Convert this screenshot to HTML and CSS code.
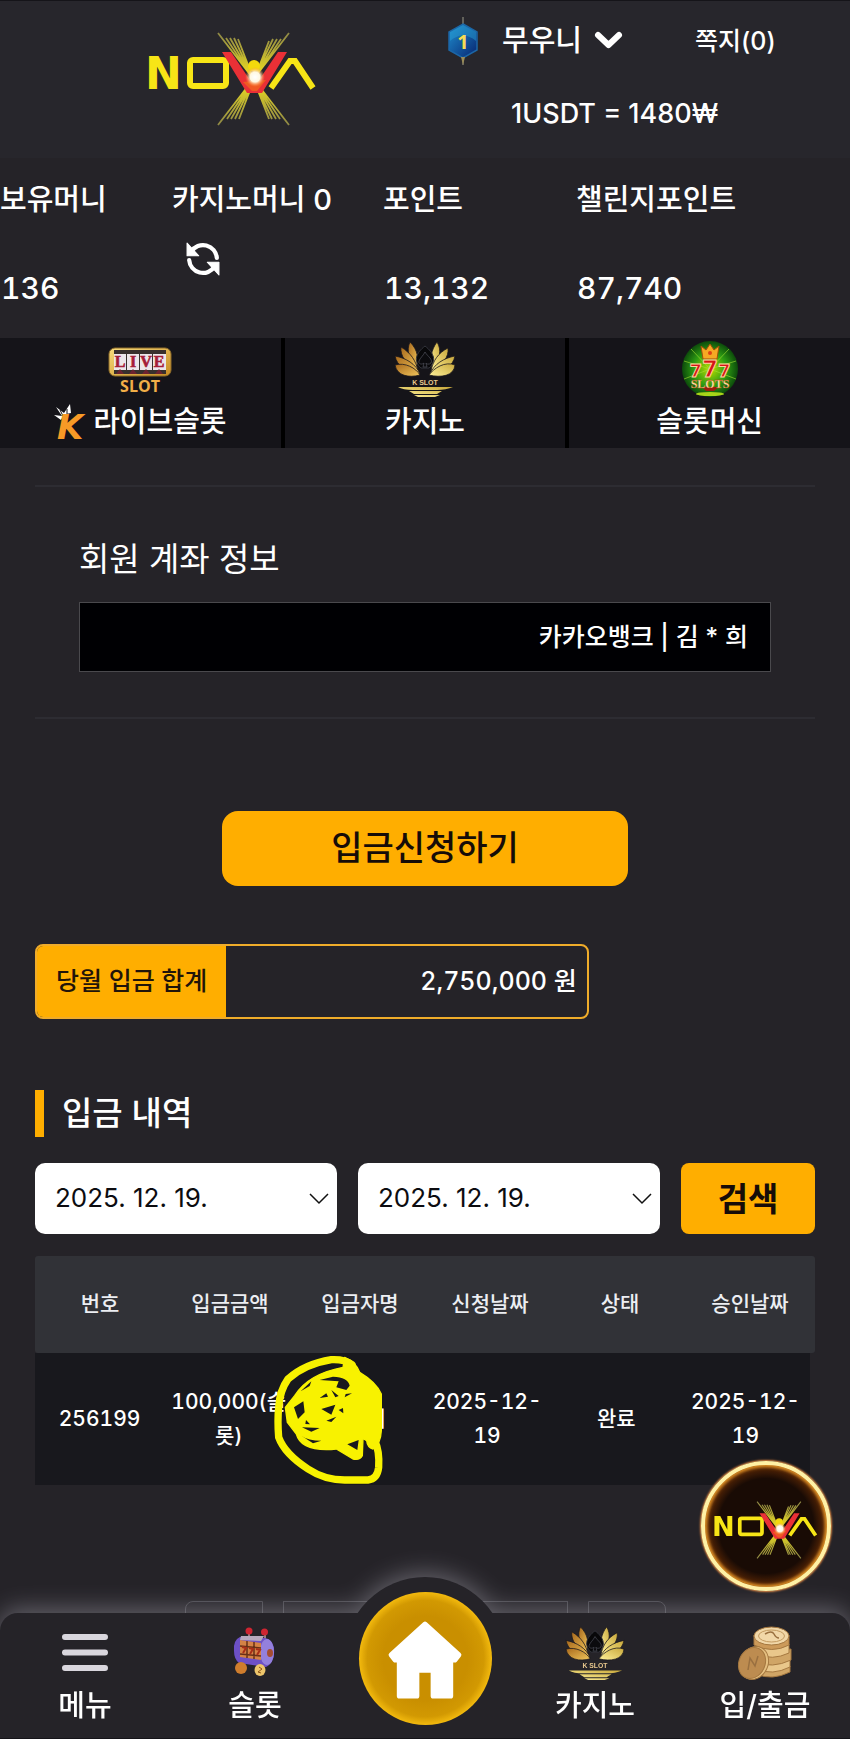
FILE: index.html
```html
<!DOCTYPE html>
<html lang="ko">
<head>
<meta charset="utf-8">
<meta name="viewport" content="width=device-width, initial-scale=1">
<title>NOVA 입금</title>
<link rel="stylesheet" href="styles.css">
</head>
<body>
<svg class="defs" aria-hidden="true">
  <defs>
    <linearGradient id="gold" x1="0" y1="0" x2="1" y2="1"><stop offset="0" stop-color="#f7dd7c"/><stop offset="1" stop-color="#c78a22"/></linearGradient>
    <linearGradient id="petalL" x1="0" y1="0" x2="1" y2="1"><stop offset="0" stop-color="#a8691c"/><stop offset="1" stop-color="#f2c75c"/></linearGradient>
    <linearGradient id="petalR" x1="1" y1="0" x2="0" y2="1"><stop offset="0" stop-color="#c9a83b"/><stop offset="1" stop-color="#fff29a"/></linearGradient>
    <linearGradient id="ray" x1="0" y1="0" x2="0" y2="1"><stop offset="0" stop-color="#8d8746"/><stop offset=".5" stop-color="#f5e51c"/><stop offset="1" stop-color="#8d8746"/></linearGradient>
    <radialGradient id="spark"><stop offset="0" stop-color="#fff"/><stop offset=".5" stop-color="#fff8e0"/><stop offset="1" stop-color="#ff8a2a" stop-opacity="0"/></radialGradient>
    <radialGradient id="green"><stop offset="0" stop-color="#b8e000"/><stop offset=".6" stop-color="#2c9a12"/><stop offset="1" stop-color="#0c4a0b"/></radialGradient>
    <linearGradient id="blue" x1="0" y1="0" x2="1" y2="1"><stop offset="0" stop-color="#1f8fd0"/><stop offset="1" stop-color="#07236f"/></linearGradient>
    <symbol id="logo" viewBox="147 32 171 94">
      <g stroke="url(#ray)" stroke-width="1.8" fill="none">
        <path d="M218 33 289 125M226 38 280 119M230 38 276 119M234 38 272 119M238 39 269 119"/>
        <path d="M289 33 218 125M281 39 227 119M277 39 231 119M273 39 235 119M269 41 239 119"/>
      </g>
      <text x="145" y="89" font-family="DejaVu Sans, sans-serif" font-weight="700" font-size="44" fill="#f7e516">N</text>
      <rect x="190" y="60" width="36" height="26" rx="3" fill="none" stroke="#f7e516" stroke-width="6"/>
      <path d="M271 88 290 61H295L313 88" fill="none" stroke="#f7e516" stroke-width="6"/>
      <path d="M222 52H231L252 83H257L278 52H287L262 93H247Z" fill="#ea3036"/>
      <path d="M243 82 252 91H257L266 80Z" fill="#f05a22"/>
      <circle cx="254" cy="66" r="6" fill="#f3d90c"/>
      <circle cx="255" cy="77" r="10" fill="url(#spark)"/>
    </symbol>
    <symbol id="lotus" viewBox="0 0 62 56">
      <g fill="url(#petalL)" stroke="#1a171c" stroke-width=".8">
        <path d="M16 1C24 9 25 18 22 27 15 18 12 9 16 1Z"/><path d="M7 6C17 12 22 20 24 30 12 23 6 15 7 6Z"/><path d="M1 15C12 17 22 23 26 33 12 31 3 25 1 15Z"/><path d="M1 24C11 21 22 27 26 34 15 37 3 35 1 24Z"/>
      </g>
      <g fill="url(#petalR)" stroke="#1a171c" stroke-width=".8">
        <path d="M43 1C37 9 36 18 38 27 46 18 48 9 43 1Z"/><path d="M54 7C44 12 39 20 37 30 49 24 55 16 54 7Z"/><path d="M61 15C50 17 40 23 36 33 50 31 59 25 61 15Z"/><path d="M61 24C51 20 40 27 35 34 47 37 60 35 61 24Z"/>
      </g>
      <path d="M31 5C40 12 43 20 35 27H27C19 20 22 12 31 5Z" fill="#08080a" stroke="#33343c"/>
      <path d="M31 11C34 16 39 18 37 22 35 24 32 23 32 22L33 26H29L30 22C28 24 24 23 25 20 26 17 29 15 31 11Z" fill="#0b0b0e" stroke="#50525c" stroke-width=".7"/>
      <text x="31" y="44" text-anchor="middle" font-family="Liberation Sans, sans-serif" font-weight="700" font-size="7" fill="#e9c98e">K SLOT</text>
      <path d="M4 46H59Q52 49 43 49H19Q9 49 4 46ZM15 50H48L43 53H20ZM20 54H46L41 56H24Z" fill="url(#petalR)"/>
    </symbol>
  </defs>
</svg>

<header class="top">
  <a class="brand" href="#" aria-label="NOVA"><svg class="brand-logo"><use href="#logo"/></svg></a>
  <div class="top-info">
    <div class="user-row">
      <button class="user" type="button">
        <svg class="level" viewBox="0 0 30 50" aria-hidden="true"><path d="M15 1V49" stroke="#77766b" stroke-width="1.5"/><path d="M15 8 29 16V34L15 42 1 34V16Z" fill="url(#blue)" stroke="#1c66a6" stroke-width="1.5"/><path d="M15 9 28 16V25Q15 14 2 25V16Z" fill="#2aa5d8" opacity=".45"/><path d="M13 41H17L15 49Z" fill="#9a8b57"/><text x="15" y="33" text-anchor="middle" font-family="Open Sans, sans-serif" font-weight="700" font-size="20" fill="#f6dc55">1</text></svg>
        <span>무우니</span>
        <svg class="caret" viewBox="0 0 29 20" aria-hidden="true"><path d="M4 4 14.500 14 25 4" fill="none" stroke="#fff" stroke-width="6" stroke-linecap="round" stroke-linejoin="round"/></svg>
      </button>
      <a class="messages" href="#">쪽지(0)</a>
    </div>
    <p class="rate">1USDT = 1480₩</p>
  </div>
</header>

<section class="balances">
  <div class="balance"><p class="balance-label">보유머니</p><p class="balance-value">136</p></div>
  <div class="balance"><p class="balance-label">카지노머니 0</p>
    <button class="refresh" type="button" aria-label="새로고침"><svg viewBox="0 0 32 32"><path d="M5 9A13 13 0 0 1 29 15M27 23A13 13 0 0 1 3 17" fill="none" stroke="#fff" stroke-width="4" stroke-linecap="round"/><path d="M1 1V13H12ZM31 31V19H20Z" fill="#fff" stroke="#fff" stroke-linejoin="round"/></svg></button>
  </div>
  <div class="balance"><p class="balance-label">포인트</p><p class="balance-value">13,132</p></div>
  <div class="balance"><p class="balance-label">챌린지포인트</p><p class="balance-value">87,740</p></div>
</section>

<nav class="tabs" aria-label="게임">
  <a class="tab" href="#">
    <svg class="tab-icon" viewBox="0 0 64 56" aria-hidden="true"><rect x="1" y="7" width="62" height="28" rx="6" fill="url(#gold)" stroke="#8d6b2a"/><rect x="6" y="9" width="52" height="24" fill="#38302d"/><g fill="#ece6ea"><rect x="6" y="13" width="12" height="16"/><rect x="19" y="13" width="12" height="16"/><rect x="32" y="13" width="12" height="16"/><rect x="45" y="13" width="13" height="16"/></g><g font-family="Liberation Serif, serif" font-weight="700" font-size="16" fill="#a51d38" stroke="#a51d38" stroke-width=".6" text-anchor="middle"><text x="12" y="26">L</text><text x="25" y="26">I</text><text x="38" y="26">V</text><text x="51" y="26">E</text></g><path d="M12 28 16 33H8ZM25 28 29 33H21ZM38 28 42 33H34ZM51 28 55 33H47Z" fill="#6d2230"/><text x="32" y="51" text-anchor="middle" font-family="Open Sans, sans-serif" font-weight="700" font-size="16" fill="#f1ae48">SLOT</text></svg>
    <span class="tab-label"><svg class="k-icon" viewBox="0 0 34 36" aria-hidden="true"><path d="M0 11 8 12 2 3 10 9 16 0 17 9Q9 10 7 16Z" fill="#fff"/><path d="M6 6 9 12M13 5 13 10" stroke="#151419"/><text x="3" y="35" font-family="DejaVu Sans, sans-serif" font-style="italic" font-weight="700" font-size="34" fill="#f79a26">K</text></svg>라이브슬롯</span>
  </a>
  <a class="tab" href="#"><svg class="tab-icon"><use href="#lotus"/></svg><span class="tab-label">카지노</span></a>
  <a class="tab" href="#">
    <svg class="tab-icon" viewBox="0 0 56 56" aria-hidden="true"><circle cx="28" cy="28" r="28" fill="url(#green)"/><path d="M28 28 9 8M28 28 2 20M28 28 54 20M28 28 47 8M28 28 2 38M28 28 54 38" stroke="#a6e234" opacity=".6"/><path d="M19 5 24 9 28 3 32 9 37 5 35 18H21Z" fill="#f6a923" stroke="#a34d0b"/><circle cx="28" cy="12" r="2" fill="#df4215"/><text x="28" y="36" text-anchor="middle" font-family="DejaVu Sans, sans-serif" font-weight="700" font-size="18" fill="#d41616" stroke="#ffd6a0" stroke-width="1">7<tspan font-size="23">7</tspan>7</text><path d="M20 46H37L32 50H24Z" fill="#9c1d0d"/><text x="28" y="47" text-anchor="middle" font-family="Liberation Serif, serif" font-weight="700" font-size="12" fill="#ffe7a8" stroke="#b5420b" stroke-width=".3">SLOTS</text><ellipse cx="28" cy="53" rx="14" ry="2" fill="#a7d519"/></svg>
    <span class="tab-label">슬롯머신</span>
  </a>
</nav>

<main class="content">
  <section class="account">
    <h2 class="account-title">회원 계좌 정보</h2>
    <p class="account-box">카카오뱅크 | 김 * 희</p>
  </section>

  <button class="deposit" type="button">입금신청하기</button>

  <dl class="total"><dt>당월 입금 합계</dt><dd>2,750,000 원</dd></dl>

  <h2 class="history-title">입금 내역</h2>
  <form class="filters">
    <select class="date" aria-label="시작 날짜"><option>2025. 12. 19.</option></select>
    <select class="date" aria-label="종료 날짜"><option>2025. 12. 19.</option></select>
    <button class="search" type="button">검색</button>
  </form>

  <table class="history">
    <thead><tr><th>번호</th><th>입금금액</th><th>입금자명</th><th>신청날짜</th><th>상태</th><th>승인날짜</th></tr></thead>
    <tbody><tr>
      <td>256199</td>
      <td>100,000(슬롯)</td>
      <td class="masked">김 * 희
        <svg class="scribble" viewBox="25 33 336 390" aria-hidden="true">
          <path d="M262 62Q240 45 200 47 120 60 70 105 45 140 42 190 38 230 42 280 60 330 130 375 180 408 240 408H310Q338 405 342 370 345 320 330 290" fill="none" stroke="#f8f200" stroke-width="22" stroke-linejoin="round" stroke-linecap="round"/>
          <path d="M240 40Q275 55 285 85 335 115 350 150V260Q348 300 325 315 308 310 306 290L295 283 293 335Q285 350 265 345L215 315Q110 325 95 270L68 235 62 190 90 155Q130 90 235 70Z" fill="#f8f200" stroke="#f8f200" stroke-width="4" stroke-linejoin="round"/>
          <path d="M165 108 205 98Q250 100 255 125L245 138 215 130 222 112ZM108 142 140 112 135 126ZM88 190 116 172 120 205 100 225ZM165 162 185 148 190 158ZM170 195 212 182 200 212ZM222 198 235 192 236 208ZM185 230 215 218 200 234ZM124 228 136 241 122 240ZM112 250 165 252 140 263ZM110 275Q130 290 170 290L145 298ZM248 301 282 288 278 318ZM243 150 262 148 240 160ZM200 138 222 156 212 160Z" fill="#19191e"/>
        </svg>
      </td>
      <td>2025-12-19</td>
      <td>완료</td>
      <td>2025-12-19</td>
    </tr></tbody>
  </table>

  <div class="pager" aria-hidden="true"><span></span><span></span><span></span></div>
</main>

<a class="float-logo" href="#" aria-label="NOVA"><svg><use href="#logo"/></svg></a>

<nav class="dock" aria-label="하단 메뉴">
  <span class="bump"></span>
  <div class="dock-items">
    <a href="#"><svg class="dock-icon" viewBox="0 0 60 56" aria-hidden="true"><path d="M10 12H50M10 27.500H50M10 43H50" stroke="#d9d6dd" stroke-width="6" stroke-linecap="round"/></svg><span>메뉴</span></a>
    <a href="#"><svg class="dock-icon" viewBox="0 0 56 56" aria-hidden="true"><path d="M22 8V18M38 9V18" stroke="#bf9ba0" stroke-width="1.500"/><circle cx="22" cy="6" r="3.500" fill="#cf2531"/><circle cx="37.500" cy="7" r="3.500" fill="#cf2531"/><path d="M13 12Q6 15 7 26 7 34 12 38L39 42Q48 38 47 23 45 14 38 13Z" fill="#6d50c5"/><ellipse cx="40" cy="27" rx="7" ry="13" fill="#9480dc"/><path d="M14 11H37L34 16 13 15Z" fill="#b8a9bd"/><path d="M13 15 34 18V35L13 32Z" fill="#d58245"/><path d="M20 16V33M27 17V34M13 21 34 23M13 29 34 31" stroke="#673018" stroke-width="1.500"/><path d="M15 22 19 23 16 28M22 23 26 24 23 29M29 24 33 25 30 30" fill="none" stroke="#a82e17" stroke-width="2"/><ellipse cx="43" cy="28" rx="3" ry="4" fill="#a54c30"/><ellipse cx="14" cy="43" rx="6" ry="6" fill="#cf7d2d"/><ellipse cx="33" cy="45" rx="5.500" ry="6" fill="#edc56b"/><path d="M32 42 35 44 31 47 34 48" fill="none" stroke="#8d5417"/></svg><span>슬롯</span></a>
    <a class="home" href="#" aria-label="홈"><svg viewBox="0 0 80 80" aria-hidden="true"><path d="M40 6 73 36 69 41H65V76H48V51H32V76H15V41H11L7 36Z" fill="#fff" stroke="#fff" stroke-width="5" stroke-linejoin="round"/></svg></a>
    <a href="#"><svg class="dock-icon"><use href="#lotus"/></svg><span>카지노</span></a>
    <a href="#"><svg class="dock-icon" viewBox="0 0 56 56" aria-hidden="true"><g stroke="#a57840" stroke-width="1"><path d="M19 44V49Q35 56 53 47V41Z" fill="#d0a566"/><path d="M20 36V44Q35 51 53 42V35Z" fill="#e9c78b"/><path d="M18 28V37Q35 44 54 35V24Z" fill="#d0a566"/><path d="M20 20V29Q35 36 52 28V19Z" fill="#e9c78b"/><path d="M17 10V20Q35 29 52 20V10Z" fill="#cc9a5a"/><ellipse cx="34.500" cy="11" rx="17.500" ry="9" fill="#f1d7a8"/><ellipse cx="17" cy="38" rx="14" ry="17" transform="rotate(25 17 38)" fill="#e5bf80"/><ellipse cx="15" cy="38" rx="13" ry="16" transform="rotate(25 15 38)" fill="#bd8c50"/></g><ellipse cx="34.500" cy="11" rx="13" ry="6" fill="none" stroke="#c39a60"/><path d="M28 9Q35 5 37 9T42 13M11 45 13 33 18 41 21 31" fill="none" stroke="#9a7040" stroke-width="1.500"/></svg><span>입/출금</span></a>
  </div>
</nav>
</body>
</html>
```

FILE: styles.css
```css
* { box-sizing: border-box; }

body {
  margin: 0;
  min-height: 100vh;
  background: #252328;
  color: #fff;
  font-family: Inter, "Noto Sans CJK KR", sans-serif;
  font-size: 29px;
  font-weight: 500;
  line-height: 40px;
}

h2, p, dl, dd { margin: 0; font-weight: inherit; }
a { color: inherit; text-decoration: none; }
svg { display: block; overflow: visible; }
button, select { font: inherit; color: inherit; border: 0; padding: 0; background: none; }
.defs { position: absolute; width: 0; height: 0; }

/* Header */
.top {
  display: grid;
  grid-template-columns: 1fr 1fr;
  min-height: 158px;
  background: #27262c;
  border-top: 1px solid #151419;
}
.brand { justify-self: center; padding: 31px 0 0 40px; }
.brand-logo { width: 171px; height: 94px; }
.top-info { padding: 15px 0 24px 23px; }
.user-row { display: flex; align-items: center; gap: 72px; }
.user { display: flex; align-items: center; gap: 12px; }
.level { width: 30px; height: 50px; margin-right: 12px; }
.caret { width: 29px; height: 20px; }
.messages { font-size: 25px; }
.rate { margin-top: 28px; padding-left: 63px; font-size: 27px; }

/* Balances */
.balances {
  display: grid;
  grid-template-columns: 172fr 211fr 193fr 274fr;
  padding: 22px 0 30px;
}
.balance { white-space: nowrap; }
.balance-value { margin-top: 48px; padding-left: 1px; font-size: 30px; font-variant-numeric: tabular-nums; }
.refresh { width: 34px; margin: 22px 0 0 14px; }

/* Game tabs */
.tabs { display: grid; grid-template-columns: repeat(3, 1fr); gap: 4px; background: #000; }
.tab {
  display: flex;
  flex-direction: column;
  align-items: center;
  gap: 5px;
  padding: 3px 0 6px;
  background: #151419;
}
.tab-icon { width: 64px; height: 56px; }
.tab-label { display: flex; align-items: center; gap: 5px; }
.k-icon { width: 34px; height: 36px; }

/* Content */
.content { padding: 37px 35px 0; }
.account {
  padding: 52px 44px 45px;
  border: solid #2d2c32;
  border-width: 2px 0;
}
.account-title { font-size: 33px; font-weight: 400; }
.account-box {
  margin-top: 23px;
  padding: 14px 22px;
  background: #000003;
  border: 1px solid #4a494d;
  font-size: 25px;
  text-align: right;
}
.deposit {
  display: block;
  width: 52%;
  margin: 92px auto 0;
  padding: 17px 0 18px;
  border-radius: 16px;
  background: #ffae00;
  color: #160c08;
  font-size: 34px;
  font-weight: 500;
}
.total {
  display: flex;
  width: 71%;
  margin-top: 58px;
  overflow: hidden;
  border: 2px solid #f0ac2a;
  border-radius: 8px;
  font-size: 25px;
}
.total dt { padding: 15px 19px 16px; background: #ffae00; color: #21140a; }
.total dd { flex: 1; padding: 15px 10px 16px; font-variant-numeric: tabular-nums; text-align: right; }
.history-title {
  margin-top: 71px;
  padding: 3px 0 4px 18px;
  border-left: 9px solid #ffae00;
  font-size: 33px;
}
.filters { display: grid; grid-template-columns: 302fr 302fr 134fr; gap: 21px; margin-top: 26px; }
.date {
  appearance: none;
  min-width: 0;
  padding: 15px 20px 16px;
  border-radius: 10px;
  background: #fff url("data:image/svg+xml,%3Csvg xmlns='http://www.w3.org/2000/svg' width='20' height='12'%3E%3Cpath d='M1 1 10 10 19 1' fill='none' stroke='%23111' stroke-width='1.5'/%3E%3C/svg%3E") no-repeat right 8px center;
  color: #0c0c10;
  font-size: 26px;
  font-weight: 400;
}
.search { border-radius: 8px; background: #ffae00; color: #160c08; font-size: 33px; font-weight: 600; }

/* Deposit history */
.history { display: block; margin-top: 22px; font-size: 21px; line-height: 34px; }
.history thead, .history tbody { display: block; }
.history tr { display: grid; grid-template-columns: repeat(6, 1fr); align-items: center; }
.history thead { padding: 31px 0 32px; border-radius: 3px; background: #313237; color: #eceef2; }
.history tbody { margin-right: 5px; padding: 32px 0; background: #18181d; font-variant-numeric: tabular-nums; }
.history th, .history td { padding: 0 5px; font-weight: 500; text-align: center; }
.history .masked { position: relative; padding: 0 12px 0 5px; }
.scribble { position: absolute; left: -20px; top: -47px; width: 112px; height: 130px; }

.pager { display: flex; justify-content: center; gap: 20px; margin-top: 116px; }
.pager span { width: 78px; height: 60px; border: 1px solid #4a494f; }
.pager span:first-child { border-radius: 8px 0 0 8px; }
.pager span:nth-child(2) { width: 285px; }
.pager span:last-child { border-radius: 0 8px 8px 0; }

/* Floating badge */
.float-logo {
  position: fixed;
  right: 19px;
  bottom: 148px;
  display: grid;
  place-items: center;
  width: 130px;
  height: 130px;
  padding-top: 8px;
  border: 4px solid #fff1a5;
  border-radius: 50%;
  background: radial-gradient(circle, #190b05 55%, #4a2005 66%, #a75d13 71%);
  box-shadow: 0 0 2px 1px #e88c43, inset 0 0 4px 1px #f4a52c;
}
.float-logo svg { width: 106px; height: 58px; }

/* Bottom dock */
.dock {
  position: fixed;
  left: 0;
  right: 0;
  bottom: 0;
  filter: drop-shadow(0 -4px 12px rgba(190, 188, 200, .42));
}
.bump {
  position: absolute;
  left: 50%;
  top: -36px;
  width: 162px;
  height: 162px;
  margin-left: -81px;
  border-radius: 50%;
  background: #252328;
}
.dock-items {
  position: relative;
  display: grid;
  grid-template-columns: repeat(5, 1fr);
  grid-template-rows: minmax(0, 1fr);
  height: 126px;
  border-bottom: 1px solid #151419;
  border-radius: 18px 18px 0 0;
  background: #252328;
}
.dock-items a { display: flex; flex-direction: column; align-items: center; gap: 5px; padding-top: 12px; }
.dock-icon { width: 60px; height: 56px; }
.dock-items .home {
  align-self: end;
  justify-self: center;
  justify-content: center;
  width: 133px;
  height: 133px;
  margin-bottom: 13px;
  padding: 0;
  border-radius: 50%;
  background: radial-gradient(circle, #c98f00 45%, #d29902 62%, #f0b70d 70%);
}
.home svg { width: 82px; height: 82px; }
```
